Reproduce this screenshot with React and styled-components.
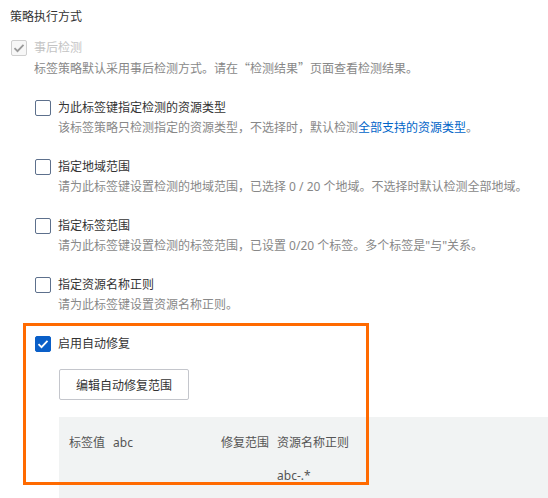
import React from 'react';
import styled, { createGlobalStyle } from 'styled-components';

const GlobalStyle = createGlobalStyle`
  html, body {
    margin: 0;
    padding: 0;
    background: #fff;
    overflow: hidden;
  }

  body {
    font-family: "Noto Sans", "Noto Sans CJK SC", sans-serif;
    font-size: 12px;
    color: #333;
  }
`;

const Page = styled.div`
  padding: 7px 0 0 10px;
  width: 538px;
  height: 491px;
  overflow: hidden;
`;

const Title = styled.div`
  line-height: 20px;
  color: #333;
`;

const Row = styled.label`
  display: flex;
  align-items: center;
  gap: 7px;
  height: 20px;
  line-height: 20px;
  color: ${props => (props.disabled ? '#c4c4c4' : '#333')};
  white-space: nowrap;
`;

const Box = styled.span`
  display: inline-flex;
  align-items: center;
  justify-content: center;
  box-sizing: border-box;
  width: 16px;
  height: 16px;
  border-radius: 2px;
  border: 1px solid ${props =>
    props.disabled ? '#cfcfcf' : props.checked ? '#0a5fc8' : '#5d708c'};
  background: ${props =>
    props.disabled ? '#f7f7f7' : props.checked ? '#0a5fc8' : '#fff'};
  flex: none;
`;

const Desc = styled.div`
  line-height: 20px;
  color: #888;
  white-space: nowrap;
  padding-left: ${props => props.indent || 0}px;
`;

const Link = styled.span`
  color: #0064c8;
`;

// full-width CJK quotation marks
const Quote = styled.span`
  font-family: "Noto Sans CJK SC", sans-serif;
`;

const PostCheck = styled.div`
  margin-top: 11px;
  padding-left: 1px;
`;

const Options = styled.div`
  display: flex;
  flex-direction: column;
  gap: 19px;
  margin-top: 19px;
  padding-left: 25px;
`;

const Option = styled.div`
  position: relative;
`;

const Highlight = styled.div`
  position: absolute;
  top: -11px;
  left: -12px;
  width: 346px;
  height: 162px;
  box-sizing: border-box;
  border: 3px solid #ff6a00;
  pointer-events: none;
  z-index: 2;
`;

const Body = styled.div`
  padding-left: 24px;
`;

const Button = styled.button`
  display: block;
  margin-top: 15px;
  height: 31px;
  padding: 0 16px;
  border: 1px solid #c4c6cc;
  border-radius: 2px;
  background: #fff;
  color: #333;
  font: inherit;
  font-size: 12px;
  cursor: pointer;
`;

const Panel = styled.div`
  margin-top: 17px;
  width: 489px;
  padding: 16px 10px 20px;
  box-sizing: border-box;
  background: #f1f3f3;
  display: flex;
`;

const Field = styled.div`
  display: flex;
  gap: 8px;
  width: ${props => props.width || 'auto'};
  line-height: 20px;
  color: #555;
`;

const Values = styled.div`
  display: flex;
  flex-direction: column;
  gap: 13px;
`;

const Check = ({ checked, disabled }) => (
  <Box checked={checked} disabled={disabled}>
    {(checked || disabled) && (
      <svg width="12" height="10" viewBox="0 0 12 10">
        <path
          d="M1.5 5.2 L4.5 8.2 L10.5 1.8"
          fill="none"
          stroke={disabled ? '#9a9a9a' : '#fff'}
          strokeWidth="1.8"
        />
      </svg>
    )}
  </Box>
);

const options = [
  {
    label: '为此标签键指定检测的资源类型',
    desc: (
      <>
        该标签策略只检测指定的资源类型，不选择时，默认检测
        <Link>全部支持的资源类型</Link>。
      </>
    )
  },
  {
    label: '指定地域范围',
    desc: '请为此标签键设置检测的地域范围，已选择 0 / 20 个地域。不选择时默认检测全部地域。'
  },
  {
    label: '指定标签范围',
    desc: '请为此标签键设置检测的标签范围，已设置 0/20 个标签。多个标签是"与"关系。'
  },
  {
    label: '指定资源名称正则',
    desc: '请为此标签键设置资源名称正则。'
  }
];

const App = () => (
  <Page>
    <GlobalStyle />
    <Title>策略执行方式</Title>
    <PostCheck>
      <Row disabled>
        <Check checked disabled />
        事后检测
      </Row>
      <Desc indent={23}>
        标签策略默认采用事后检测方式。请在<Quote>“</Quote>检测结果<Quote>”</Quote>页面查看检测结果。
      </Desc>
    </PostCheck>
    <Options>
      {options.map(opt => (
        <Option key={opt.label}>
          <Row>
            <Check />
            {opt.label}
          </Row>
          <Desc indent={23}>{opt.desc}</Desc>
        </Option>
      ))}
      <Option>
        <Highlight />
        <Row>
          <Check checked />
          启用自动修复
        </Row>
        <Body>
          <Button>编辑自动修复范围</Button>
          <Panel>
            <Field width="152px">
              <span>标签值</span>
              <span>abc</span>
            </Field>
            <Field>
              <span>修复范围</span>
              <Values>
                <span>资源名称正则</span>
                <span>abc-.*</span>
              </Values>
            </Field>
          </Panel>
        </Body>
      </Option>
    </Options>
  </Page>
);

export default App;
